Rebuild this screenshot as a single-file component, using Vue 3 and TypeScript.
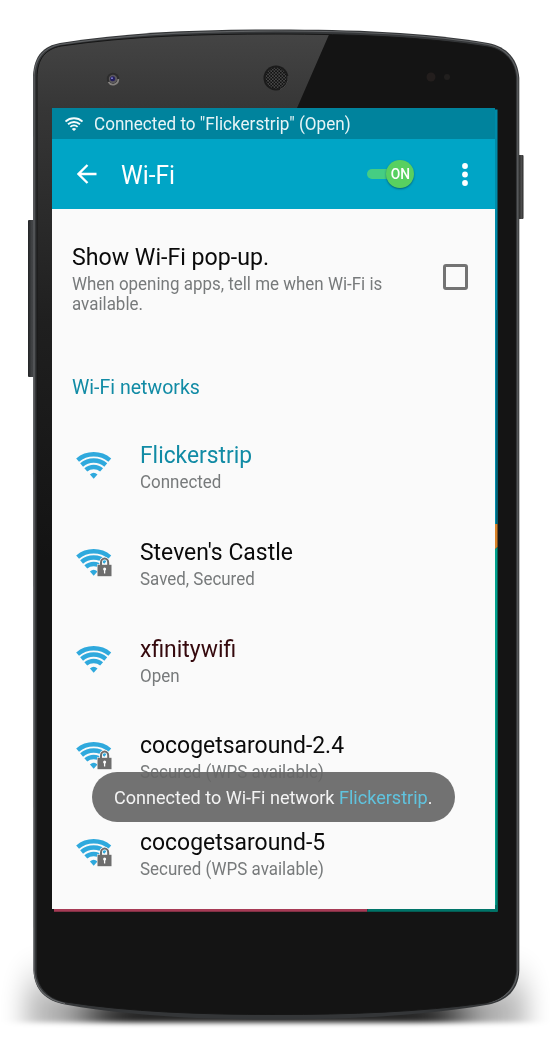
<script setup lang="ts">
interface Network {
  name: string
  status: string
  locked: boolean
  tone: 'active' | 'plain' | 'maroon'
}

const networks: Network[] = [
  { name: 'Flickerstrip', status: 'Connected', locked: false, tone: 'active' },
  { name: "Steven's Castle", status: 'Saved, Secured', locked: true, tone: 'plain' },
  { name: 'xfinitywifi', status: 'Open', locked: false, tone: 'maroon' },
  { name: 'cocogetsaround-2.4', status: 'Secured (WPS available)', locked: true, tone: 'plain' },
  { name: 'cocogetsaround-5', status: 'Secured (WPS available)', locked: true, tone: 'plain' },
]
</script>

<template>
  <main class="stage">
    <svg class="device" viewBox="0 0 550 1054" aria-hidden="true">
      <defs>
        <linearGradient id="glare" x1="0" y1="35" x2="0" y2="560" gradientUnits="userSpaceOnUse">
          <stop offset="0" stop-color="#444" />
          <stop offset="0.14" stop-color="#363636" />
          <stop offset="0.55" stop-color="#1f1f1f" />
          <stop offset="1" stop-color="#131313" />
        </linearGradient>
        <linearGradient id="keyL" x1="28" x2="34" y1="0" y2="0" gradientUnits="userSpaceOnUse">
          <stop offset="0" stop-color="#222426" />
          <stop offset="0.6" stop-color="#3f4143" />
          <stop offset="1" stop-color="#444648" />
        </linearGradient>
        <linearGradient id="keyR" x1="519" x2="524" y1="0" y2="0" gradientUnits="userSpaceOnUse">
          <stop offset="0" stop-color="#2b2b2b" />
          <stop offset="0.5" stop-color="#4c4c4c" />
          <stop offset="1" stop-color="#202020" />
        </linearGradient>
        <pattern id="mesh" width="3.2" height="3.2" patternUnits="userSpaceOnUse">
          <rect width="3.2" height="3.2" fill="#4c4c4c" />
          <circle cx="0.8" cy="0.8" r="0.95" fill="#0e0e0e" />
          <circle cx="2.4" cy="2.4" r="0.95" fill="#0e0e0e" />
        </pattern>
        <filter id="soft" filterUnits="userSpaceOnUse" x="-50" y="850" width="650" height="250">
          <feGaussianBlur stdDeviation="24 5" />
        </filter>
        <filter id="wide" filterUnits="userSpaceOnUse" x="-50" y="850" width="650" height="250">
          <feGaussianBlur stdDeviation="13 20" />
        </filter>
        <filter id="edge" filterUnits="userSpaceOnUse" x="-50" y="850" width="650" height="250">
          <feGaussianBlur stdDeviation="0 2.4" />
        </filter>
        <clipPath id="floor"><rect x="0" y="880" width="550" height="142.500" /></clipPath>
        <clipPath id="face">
          <path d="M37 78C37 58 46 49 61 46C130 36 200 34 276 34C352 34 425 37 488 47C505 50 515 62 515.500 78V972C514 990 502 1000 485 1003C420 1012 350 1014.500 276 1014.500C200 1014.500 130 1012 66 1002C49 999 38 988 37 972Z" />
        </clipPath>
      </defs>

      <g filter="url(#edge)">
        <g clip-path="url(#floor)">
          <path d="M26 984H526V1040H26Z" fill="#000" opacity="0.32" filter="url(#wide)" />
          <path d="M90 1003H460V1035H90Z" fill="#000" opacity="0.8" filter="url(#soft)" />
        </g>
      </g>

      <rect x="28" y="220" width="7" height="157" rx="1" fill="url(#keyL)" />
      <rect x="518" y="155" width="5.500" height="64" rx="1" fill="url(#keyR)" />

      <path d="M33 76C34 55 44 46 60 43C130 32 200 29.500 276 29.500C352 29.500 425 32 488 43C508 47 518 60 519.300 78V970C519 990 506 1001 489 1004.500C420 1016 350 1019.500 276 1019.500C200 1019.500 130 1016 65 1004.500C46 1001 34 990 33.500 970Z" fill="#343638" />
      <path d="M34 76C35 57 45 47.500 60 44.500C130 33.500 200 31 276 31C352 31 425 33.500 488 44.500C506 48 516.500 61 517.800 78V970C517 988 505 999.500 488 1002.500" fill="none" stroke="#5f6163" stroke-width="1.200" />
      <path d="M34 76V970C35 990 48 1000 65 1003.500" fill="none" stroke="#66686a" stroke-width="1.200" />
      <g clip-path="url(#face)">
        <rect x="30" y="30" width="490" height="990" fill="#141414" />
        <path d="M30 30H331L297 108L100 560H30Z" fill="url(#glare)" />
      </g>
      <path d="M37 78C37 58 46 49 61 46C130 36 200 34 276 34C352 34 425 37 488 47C505 50 515 62 515.500 78V972C514 990 502 1000 485 1003C420 1012 350 1014.500 276 1014.500C200 1014.500 130 1012 66 1002C49 999 38 988 37 972Z" fill="none" stroke="#161616" stroke-width="1" />

      <circle cx="113" cy="79" r="6.200" fill="#2d2d2d" />
      <path d="M108.500 82A5.300 5.300 0 0 0 118.300 79" fill="none" stroke="#85827f" stroke-width="1.800" />
      <circle cx="113" cy="79" r="4.200" fill="#5b585c" />
      <circle cx="112.600" cy="78.800" r="2.500" fill="#25205d" />
      <circle cx="112" cy="78.200" r="0.900" fill="#8a88e0" />
      <circle cx="276" cy="78" r="12.500" fill="#1b1b1b" />
      <circle cx="276" cy="78" r="10.500" fill="url(#mesh)" />
      <path d="M280 89.500A12.300 12.300 0 0 0 288 76" fill="none" stroke="#555" stroke-width="0.800" />
      <circle cx="431" cy="77" r="4.500" fill="#231e1d" />
      <circle cx="447" cy="77" r="3" fill="#211f1e" />

      <path d="M490 109.500H497.500V524H490Z" fill="#008ba9" />
      <path d="M496 310H497.500V524H496Z" fill="#00647a" />
      <path d="M490 524H497.500V547L490 554Z" fill="#d98228" />
      <path d="M490 554L497.500 547V911.500H490Z" fill="#00a28d" />
      <path d="M496.300 660H497.500V911.500H496.300Z" fill="#00796b" />
      <path d="M54 905H368L367 911.700H54Z" fill="#a73b56" />
      <path d="M369 905H497.500V911.700H367Z" fill="#007469" />
    </svg>

    <section class="screen">
      <header class="statusbar">
        <svg class="status-icon" viewBox="0 0 36 28">
          <g fill="none" stroke="#f4fbfc" stroke-width="3.700">
            <path d="M1 9A25.500 25.500 0 0 1 35 9" />
            <path d="M6 14.500A18 18 0 0 1 30 14.500" />
            <path d="M10.700 19.700A11 11 0 0 1 25.300 19.700" />
          </g>
          <path d="M13.500 24Q18 20 22.500 24L18 28Z" fill="#f4fbfc" />
        </svg>
        <span class="status-text">Connected to "Flickerstrip" (Open)</span>
      </header>

      <nav class="appbar">
        <svg class="back" viewBox="0 0 20 20">
          <path d="M19.500 10H1.800M10.500 1L1.500 10L10.500 19" fill="none" stroke="#fff" stroke-width="2.300" />
        </svg>
        <h1 class="title">Wi-Fi</h1>
        <div class="switch">
          <span class="track"></span>
          <span class="knob"><span class="knob-text">ON</span></span>
        </div>
        <svg class="more" viewBox="0 0 6 23">
          <circle cx="3" cy="3" r="2.900" fill="#fff" />
          <circle cx="3" cy="11.500" r="2.900" fill="#fff" />
          <circle cx="3" cy="20" r="2.900" fill="#fff" />
        </svg>
      </nav>

      <div class="popup">
        <div>
          <div class="name wide">Show Wi-Fi pop-up.</div>
          <p class="desc">When opening apps, tell me when Wi-Fi is<br />available.</p>
        </div>
        <span class="checkbox"></span>
      </div>

      <h2 class="heading">Wi-Fi networks</h2>

      <ul class="list">
        <li v-for="n in networks" :key="n.name" class="row">
          <svg class="wifi" viewBox="0 0 36 30">
            <g fill="none" stroke="#2fa9dd" stroke-width="4.400">
              <path d="M1.600 9.100A25 25 0 0 1 33.800 9.100" />
              <path d="M5.600 14A18.500 18.500 0 0 1 29.800 14" />
              <path d="M9.800 18.900A12 12 0 0 1 25.600 18.900" />
            </g>
            <path d="M13.900 23.600Q17.700 19.800 21.500 23.600L17.700 27.800Z" fill="#2fa9dd" />
            <g v-if="n.locked">
              <path d="M25 18V14.500A3.600 4 0 0 1 32.200 14.500V18" fill="none" stroke="#fafafa" stroke-width="3.400" />
              <rect x="21" y="16.300" width="15" height="12.500" fill="#fafafa" />
              <path d="M25 18V14.500A3.600 4 0 0 1 32.200 14.500V18" fill="none" stroke="#6d6d6d" stroke-width="2" />
              <rect x="21.500" y="16.800" width="14" height="11.400" fill="#6d6d6d" />
              <circle cx="28.600" cy="21" r="1.500" fill="#fff" />
              <path d="M28.600 21V25.500" stroke="#fff" stroke-width="1.300" />
            </g>
          </svg>
          <div>
            <div class="name" :class="n.tone">{{ n.name }}</div>
            <div class="status">{{ n.status }}</div>
          </div>
        </li>
      </ul>

      <div class="toast"><span class="toast-text">Connected to Wi-Fi network <b>Flickerstrip</b>.</span></div>
    </section>
  </main>
</template>

<style>
body {
  margin: 0;
  background: #fff;
}
</style>

<style scoped>
.stage {
  position: relative;
  box-sizing: border-box;
  width: 550px;
  height: 1054px;
  padding: 108px 0 0 52px;
  overflow: hidden;
  font-family: Roboto, "Liberation Sans", sans-serif;
}
.device {
  position: absolute;
  inset: 0;
  width: 550px;
  height: 1054px;
}
.screen {
  position: relative;
  width: 443px;
  height: 801px;
  background: #fafafa;
  white-space: nowrap;
}
.status-text,
.title,
.name,
.desc,
.heading,
.status,
.toast-text,
.knob-text {
  transform: scaleX(0.936);
  transform-origin: 0 50%;
}
.statusbar {
  display: flex;
  align-items: center;
  height: 31px;
  background: #00839d;
}
.status-icon {
  width: 18px;
  height: 14px;
  margin: 0 11px 0 13px;
}
.status-text {
  margin-top: -1px;
  font-size: 18.300px;
  color: #e6f4f6;
}
.appbar {
  display: flex;
  align-items: center;
  height: 70px;
  background: #00a5c6;
}
.back {
  width: 20px;
  height: 20px;
  margin-left: 25px;
}
.title {
  flex: 1;
  margin: 1px 0 0 24px;
  font-size: 25.800px;
  font-weight: 400;
  color: #fff;
  transform: scaleX(0.95);
}
.switch {
  display: flex;
  align-items: center;
  margin-right: 48px;
}
.track {
  width: 33px;
  height: 10px;
  margin-right: -14px;
  border-radius: 5px;
  background: #45cd83;
}
.knob {
  display: grid;
  place-items: center;
  width: 28px;
  height: 28px;
  border-radius: 50%;
  background: #58d060;
  box-shadow: 0 1px 2px rgba(0, 55, 70, 0.6);
  color: #fff;
  font-size: 15px;
  font-weight: 500;
}
.knob-text {
  transform: scaleX(0.92);
  transform-origin: 50% 50%;
}
.more {
  width: 6px;
  height: 23px;
  margin-right: 27px;
}
.popup {
  display: flex;
  justify-content: space-between;
  align-items: flex-start;
  height: 126px;
  padding: 33px 27px 0 20px;
}
.name {
  height: 29px;
  font-size: 24.500px;
  line-height: 27px;
  color: #0a0a0a;
}
.name.wide {
  line-height: 29px;
  transform: scaleX(0.945);
}
.name.active {
  color: #118ba5;
  transform: scaleX(0.93);
}
.name.maroon {
  color: #35090d;
}
.desc {
  margin: 3px 0 0;
  font-size: 18.200px;
  line-height: 20.300px;
  color: #777a7b;
  transform: scaleX(0.932);
}
.checkbox {
  box-sizing: border-box;
  width: 25px;
  height: 26px;
  margin-top: 22px;
  border: 3px solid #737373;
  border-radius: 3px;
}
.heading {
  height: 28px;
  margin: 5px 0 0 20px;
  font-size: 20.900px;
  font-weight: 400;
  line-height: 28px;
  color: #118ba5;
}
.list {
  margin: 40px 0 0;
  padding: 0;
  list-style: none;
}
.row {
  display: flex;
  height: 96.800px;
}
.wifi {
  width: 36px;
  height: 30px;
  margin: 10px 28px 0 24px;
}
.status {
  height: 22px;
  margin-top: 1px;
  font-size: 18.200px;
  line-height: 22px;
  color: #777a7b;
  transform: scaleX(0.932);
}
.toast {
  position: absolute;
  left: 40px;
  top: 664px;
  display: flex;
  align-items: center;
  box-sizing: border-box;
  width: 363px;
  height: 50px;
  padding-left: 22px;
  border-radius: 25px;
  background: rgba(102, 102, 102, 0.92);
  color: #f3f3f3;
  font-size: 19.200px;
}
.toast-text {
  transform: scaleX(0.941);
}
.toast b {
  font-weight: 400;
  color: #60c3de;
}
</style>
